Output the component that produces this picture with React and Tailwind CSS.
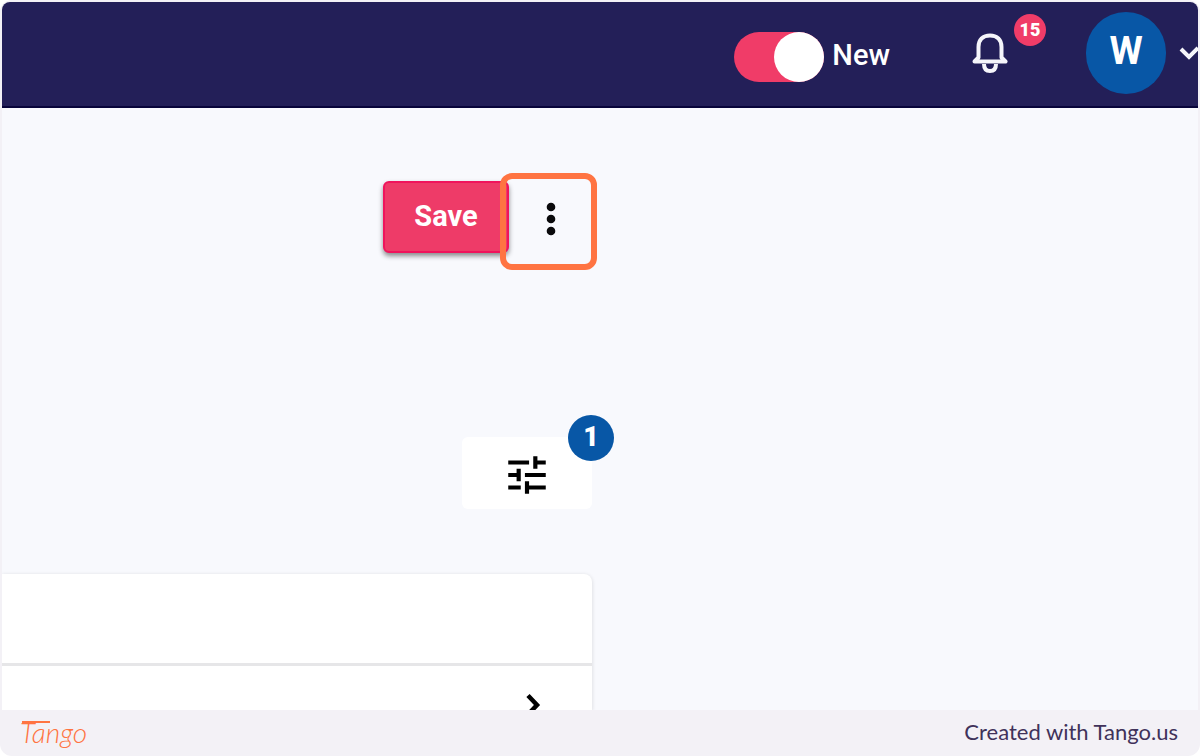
import { MdTune } from "react-icons/md";

function BellIcon() {
  return (
    <svg viewBox="0 0 36 42" className="h-[42px] w-9" fill="none" stroke="#f5f5fa" strokeWidth="4" strokeLinejoin="round" aria-hidden="true">
      <path d="M2.500 30.500 L6.500 26.500 V16 C6.500 8.500 11 4.500 18 4.500 C25 4.500 29.500 8.500 29.500 16 V26.500 L33.500 30.500 Z" />
      <path d="M12 33 C12 38 14.500 40 18 40 C21.500 40 24 38 24 33" />
    </svg>
  );
}

function Header() {
  return (
    <header className="flex h-[106px] items-start justify-end border-b-2 border-[#08043a] bg-[#231f58] text-white">
      <label className="mt-[30px] mr-[82px] flex cursor-pointer items-center gap-2">
        <input type="checkbox" defaultChecked className="peer sr-only" />
        <span className="flex h-[50px] w-[90px] justify-end rounded-full bg-[#f03c68]">
          <span className="size-[50px] rounded-full bg-white" />
        </span>
        <span className="-mt-1 text-[29px] leading-8 font-medium">New</span>
      </label>
      <button type="button" aria-label="Notifications" className="relative mt-[29px] mr-[78px]">
        <BellIcon />
        <span className="absolute -top-[17px] left-[42px] flex size-8 items-center justify-center rounded-full bg-[#f03c68] text-lg leading-none font-black">
          15
        </span>
      </button>
      <button type="button" aria-label="Account" className="mt-[10px] flex items-center gap-[13px] overflow-hidden">
        <span className="flex h-[82px] w-20 items-center justify-center rounded-full bg-[#0857a6] pb-1 text-[38px] leading-none font-bold">
          W
        </span>
        <svg viewBox="0 0 19 16" className="h-4 w-[19px]" fill="none" stroke="#f5f5fa" strokeWidth="4" aria-hidden="true">
          <path d="M2 4 L10 12 L19 3" />
        </svg>
      </button>
    </header>
  );
}

function Actions() {
  return (
    <div className="flex justify-end">
      <button type="button" className="h-[72px] w-[126px] rounded-md border-2 border-[#f0145c] bg-[#ee3b68] pb-0.5 text-[29px] leading-8 font-bold text-white shadow-[0_3px_5px_rgba(0,0,0,0.45)]">
        Save
      </button>
      <button type="button" aria-label="More options" className="relative flex h-[72px] w-[83px] items-center justify-center">
        <svg viewBox="0 0 10 34" className="mt-1 h-[34px] w-[10px]" fill="#0a0a0c" aria-hidden="true">
          <circle cx="5" cy="5" r="4.300" />
          <circle cx="5" cy="17" r="4.300" />
          <circle cx="5" cy="29" r="4.300" />
        </svg>
        <span className="absolute -top-2 -right-[5px] size-[97px] rounded-xl border-6 border-[#ff7442]" />
      </button>
    </div>
  );
}

export default function App() {
  return (
    <div className="flex min-h-screen flex-col overflow-hidden rounded-xl bg-[#f3f1f6] font-['Roboto',sans-serif]">
      <div className="mx-[2px] mt-[2px] flex flex-1 flex-col overflow-hidden rounded-t-lg bg-[#f8f9fd]">
        <Header />
        <main className="flex w-[590px] max-w-full flex-1 flex-col pt-[73px]">
          <Actions />
          <div className="mt-[184px] flex justify-end">
            <button type="button" aria-label="Filters, 1 active" className="relative flex h-[72px] w-[130px] items-center justify-center rounded-md bg-white">
              <MdTune className="mt-1 size-[50px] text-black" />
              <span className="absolute -top-[22px] -right-[22px] flex size-[46px] items-center justify-center rounded-full bg-[#0857a6] pb-0.5 text-[27px] leading-none font-black text-white">
                1
              </span>
            </button>
          </div>
          <section className="mt-[65px] flex flex-1 flex-col rounded-tr-lg bg-white shadow-[0_1px_4px_rgba(0,0,0,0.14)]">
            <div className="h-[92px] border-b-3 border-[#e6e6e8]" />
            <div className="flex h-11 items-start justify-end overflow-hidden pt-[17px] pr-[38px]">
              <button type="button" aria-label="Expand row">
                <svg viewBox="0 0 44 44" className="size-11" fill="none" stroke="#000" strokeWidth="4.500" aria-hidden="true">
                  <path d="M18 12.500 L27 22 L18 31.500" />
                </svg>
              </button>
            </div>
          </section>
        </main>
      </div>
      <footer className="flex h-[46px] items-center justify-between pr-[22px] pb-0.5 pl-5 font-['Lato',sans-serif] text-[22px] leading-7 text-[#40325a]">
        <a href="#tango" className="relative text-[28px] leading-8 font-light text-[#ff7442] italic">
          Tango
          <span className="absolute top-[5px] left-0.5 h-0.5 w-7 bg-[#ff7442]" />
        </a>
        <p>Created with Tango.us</p>
      </footer>
    </div>
  );
}
